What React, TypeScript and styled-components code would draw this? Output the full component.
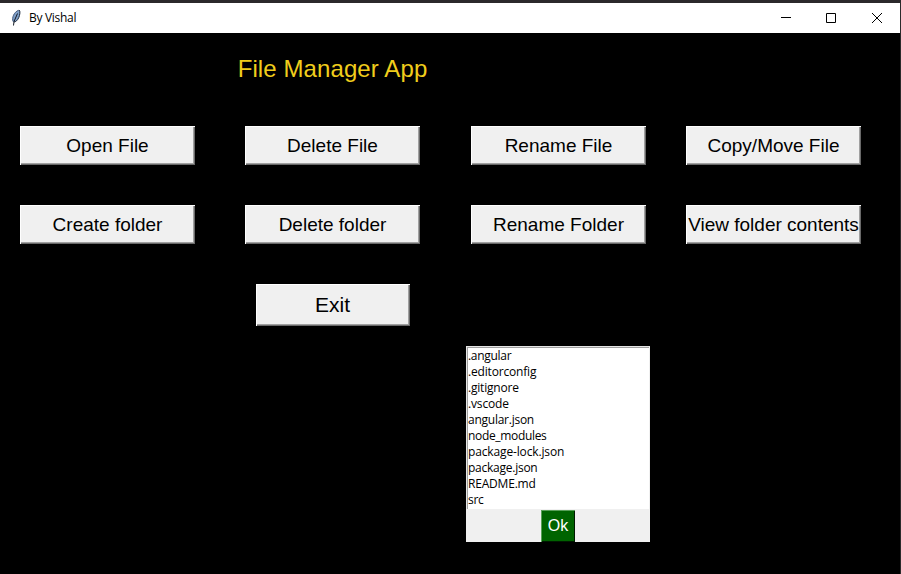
import React from "react";
import styled, { createGlobalStyle } from "styled-components";

const GlobalStyle = createGlobalStyle`
  * { box-sizing: border-box; }
  body { margin: 0; background: #000; overflow: hidden; }
`;

const Window = styled.div`
  width: 901px;
  height: 574px;
  background: #000;
  border-top: 3px solid #2b292b;
  border-right: 1px solid #2b2b2b;
`;

const TitleBar = styled.header`
  display: flex;
  align-items: center;
  height: 30px;
  padding-left: 9px;
  background: #fff;
`;

const Caption = styled.span`
  flex: 1;
  margin-left: 6px;
  font: 12px/18px "Open Sans", sans-serif;
  letter-spacing: -0.3px;
  color: #000;
`;

const ControlButton = styled.button`
  display: flex;
  align-items: center;
  justify-content: center;
  width: 46px;
  height: 30px;
  padding: 0;
  border: 0;
  background: transparent;
`;

const Board = styled.main`
  display: grid;
  grid-template-columns: 215px 235px 217px 213px;
  grid-template-rows: 73px 79px 79px 82px 196px;
  place-items: center;
`;

const Heading = styled.h1`
  grid-column: 2;
  grid-row: 1;
  margin: 0;
  padding-bottom: 2px;
  font: 24px/36px "Liberation Sans", Arial, sans-serif;
  letter-spacing: 0.1px;
  color: #f0cd1c;
  white-space: nowrap;
`;

const TkButton = styled.button<{ $row: number; $column: number; $large?: boolean }>`
  display: flex;
  align-items: center;
  justify-content: center;
  grid-row: ${(p) => p.$row};
  grid-column: ${(p) => p.$column};
  width: ${(p) => (p.$large ? 154 : 175)}px;
  height: ${(p) => (p.$large ? 42 : 39)}px;
  padding: 0;
  border: 0;
  background: #f0f0f0;
  box-shadow: inset 1px 1px #fff, inset -1px -1px #696969, inset -2px -2px #a0a0a0;
  font: ${(p) => (p.$large ? 21 : 19)}px "Liberation Sans", Arial, sans-serif;
  color: #000;
  white-space: nowrap;
`;

const Panel = styled.section`
  grid-column: 3;
  grid-row: 5;
  display: flex;
  flex-direction: column;
  align-items: center;
  width: 184px;
  height: 196px;
  margin-right: 1px;
  background: #f0f0f0;
`;

const FileList = styled.ul`
  width: 184px;
  height: 163px;
  margin: 0;
  padding: 2px 0 0 2px;
  list-style: none;
  background: #fff;
  box-shadow: inset 1px 1px #e6e6e6, inset -1px 0 #f0f0f0, inset 2px 2px #a0a0a0;
`;

const FileName = styled.li<{ $tracking: number }>`
  height: 16px;
  font: 12px/16px "Open Sans", sans-serif;
  letter-spacing: ${(p) => p.$tracking}px;
  color: #000;
  white-space: nowrap;
`;

const OkButton = styled.button`
  width: 34px;
  height: 32px;
  margin-top: 1px;
  padding: 0;
  border: 0;
  background: #006400;
  box-shadow: inset 1px 1px #58a058, inset -1px -1px #001a00;
  font: 16px/30px "Liberation Sans", Arial, sans-serif;
  color: #fff;
`;

const actions = [
  ["Open File", "Delete File", "Rename File", "Copy/Move File"],
  ["Create folder", "Delete folder", "Rename Folder", "View folder contents"],
];

const files: [string, number][] = [
  [".angular", -0.3],
  [".editorconfig", -0.18],
  [".gitignore", -0.2],
  [".vscode", -0.15],
  ["angular.json", -0.25],
  ["node_modules", -0.33],
  ["package-lock.json", -0.14],
  ["package.json", -0.25],
  ["README.md", -0.2],
  ["src", -0.3],
];

const Feather = () => (
  <svg width="14" height="18" viewBox="0 0 14 18">
    <path d="M4 13C2.5 9 5 3 10 1c1.6 1 .8 5-.2 7.500C8.500 11.500 6.500 13 4 13Z" fill="#7f9fc8" />
    <path d="M4.200 12.500C2.500 9 5 3 9.500 1.300" fill="none" stroke="#42587a" />
    <path d="M10 1c1.600 1 .8 5-.2 7.500C8.500 11.500 6.500 13 5 13" fill="none" stroke="#182334" />
    <path d="M4.500 16.500 5 12.500 8.500 4.500" fill="none" stroke="#141a24" />
  </svg>
);

export default function App() {
  return (
    <>
      <GlobalStyle />
      <Window>
        <TitleBar>
          <Feather />
          <Caption>By Vishal</Caption>
          <ControlButton aria-label="Minimize">
            <svg width="12" height="10"><path d="M2 4.500h10" stroke="#000" /></svg>
          </ControlButton>
          <ControlButton aria-label="Maximize">
            <svg width="10" height="10"><path d="M.5.5h9v9h-9z" fill="none" stroke="#000" /></svg>
          </ControlButton>
          <ControlButton aria-label="Close">
            <svg width="10" height="10"><path d="M0 0l10 10M10 0L0 10" stroke="#000" /></svg>
          </ControlButton>
        </TitleBar>
        <Board>
          <Heading>File Manager App</Heading>
          {actions.map((row, r) =>
            row.map((label, c) => (
              <TkButton key={label} $row={r + 2} $column={c + 1}>{label}</TkButton>
            ))
          )}
          <TkButton $row={4} $column={2} $large>Exit</TkButton>
          <Panel>
            <FileList>
              {files.map(([name, tracking]) => (
                <FileName key={name} $tracking={tracking}>{name}</FileName>
              ))}
            </FileList>
            <OkButton>Ok</OkButton>
          </Panel>
        </Board>
      </Window>
    </>
  );
}
